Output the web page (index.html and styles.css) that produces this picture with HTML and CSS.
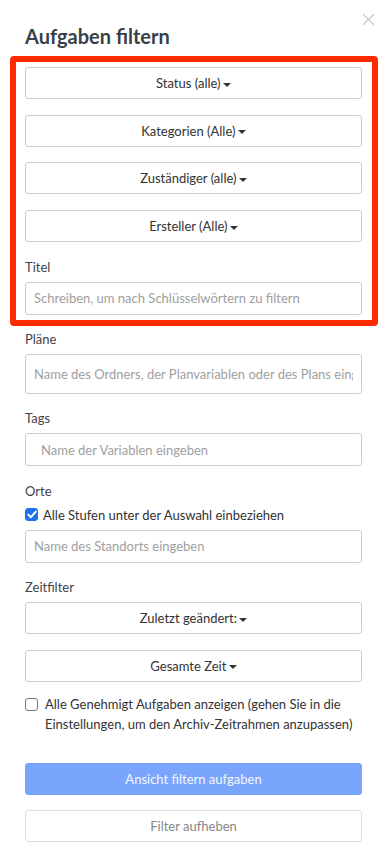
FILE: index.html
```html
<!DOCTYPE html>
<html>
<head>
    <meta charset="utf-8">
    <title>Aufgaben filtern</title>
    <link rel="stylesheet" href="styles.css">
</head>
<body>
    <div class="modal">
        <button class="close-btn" aria-label="Schließen">
            <svg width="13" height="13" viewBox="0 0 13 13">
                <path d="M1 1 L12 12 M12 1 L1 12" stroke="#c8c8c8" stroke-width="1.2" fill="none"/>
            </svg>
        </button>
        <h1>Aufgaben filtern</h1>

        <div class="highlight">
            <button class="dropdown">Status (alle) <span class="caret"></span></button>
            <button class="dropdown">Kategorien (Alle) <span class="caret"></span></button>
            <button class="dropdown">Zuständiger (alle) <span class="caret"></span></button>
            <button class="dropdown">Ersteller (Alle) <span class="caret"></span></button>

            <div class="field">
                <label class="label">Titel</label>
                <input class="input" type="text" placeholder="Schreiben, um nach Schlüsselwörtern zu filtern">
            </div>
        </div>

        <div class="field">
            <label class="label">Pläne</label>
            <input class="input tall" type="text" placeholder="Name des Ordners, der Planvariablen oder des Plans eingeben">
        </div>

        <div class="field">
            <label class="label">Tags</label>
            <input class="input indent" type="text" placeholder="Name der Variablen eingeben">
        </div>

        <div class="field">
            <label class="label">Orte</label>
            <label class="check">
                <span class="box checked">
                    <svg width="10" height="9" viewBox="0 0 10 9">
                        <path d="M1.3 4.6 L3.9 7.2 L8.8 1.6" stroke="#fff" stroke-width="2" fill="none" stroke-linecap="round" stroke-linejoin="round"/>
                    </svg>
                </span>
                Alle Stufen unter der Auswahl einbeziehen
            </label>
            <input class="input" type="text" placeholder="Name des Standorts eingeben">
        </div>

        <div class="field">
            <label class="label">Zeitfilter</label>
            <button class="dropdown">Zuletzt geändert: <span class="caret"></span></button>
            <button class="dropdown">Gesamte Zeit <span class="caret"></span></button>
        </div>

        <label class="check wrap">
            <span class="box"></span>
            <span>Alle Genehmigt Aufgaben anzeigen (gehen Sie in die Einstellungen, um den Archiv-Zeitrahmen anzupassen)</span>
        </label>

        <button class="primary-btn">Ansicht filtern aufgaben</button>
        <button class="clear-btn">Filter aufheben</button>
    </div>
</body>
</html>
```

FILE: styles.css
```css
* {
    margin: 0;
    padding: 0;
    box-sizing: border-box;
    font-family: Lato, 'Open Sans', sans-serif;
}

body {
    background: #fff;
    color: #333;
}

.modal {
    position: relative;
    width: 386px;
    padding: 24px 24px 0 25px;
    display: flex;
    flex-direction: column;
}

.close-btn {
    position: absolute;
    top: 13px;
    right: 11px;
    background: none;
    border: none;
    width: 13px;
    height: 13px;
    display: flex;
}

h1 {
    font-size: 20px;
    line-height: 24px;
    font-weight: 700;
    color: #3a3f47;
    margin-bottom: 19px;
}

.highlight {
    position: relative;
    display: flex;
    flex-direction: column;
}

/* red annotation frame drawn over the top block */
.highlight::after {
    content: '';
    position: absolute;
    top: -11px;
    left: -15px;
    right: -16px;
    bottom: -11px;
    border: 6px solid #ff2a00;
    border-radius: 4px;
    pointer-events: none;
}

.dropdown {
    height: 32px;
    background: #fff;
    border: 1px solid #ccc;
    border-radius: 3px;
    font-size: 13px;
    color: #333;
    margin-bottom: 15.67px;
    cursor: pointer;
}

.caret {
    display: inline-block;
    width: 0;
    height: 0;
    border-left: 4px solid transparent;
    border-right: 4px solid transparent;
    border-top: 4px solid #333;
    vertical-align: middle;
    margin-left: -1px;
}

.field {
    display: flex;
    flex-direction: column;
}

.label {
    font-size: 13px;
    line-height: 18px;
    color: #444;
    margin-bottom: 6px;
}

.input {
    height: 33px;
    border: 1px solid #ccc;
    border-radius: 3px;
    padding: 0 8px;
    font-size: 13px;
    color: #333;
    margin-bottom: 15.5px;
    outline: none;
}

.input::placeholder {
    color: #a0a0a0;
}

.input.tall {
    height: 40px;
}

.input.indent {
    padding-left: 15px;
}

.highlight .field .input {
    margin-bottom: 0;
}

.highlight + .field {
    margin-top: 15px;
}

.check {
    display: flex;
    align-items: center;
    gap: 5px;
    font-size: 13px;
    line-height: 18px;
    color: #333;
    margin-bottom: 6px;
}

.box {
    width: 13px;
    height: 13px;
    border: 1px solid #777;
    border-radius: 3px;
    display: flex;
    align-items: center;
    justify-content: center;
    flex-shrink: 0;
}

.box.checked {
    background: #1a73e8;
    border-color: #1a73e8;
}

.check.wrap {
    align-items: flex-start;
    gap: 7px;
    line-height: 20px;
    margin-top: -3px;
    margin-bottom: 29px;
}

.check.wrap .box {
    margin-top: 4px;
}

.primary-btn {
    height: 32px;
    background: #7aa5fd;
    border: 1px solid #76a1f8;
    border-radius: 3px;
    color: #f4f7ff;
    font-size: 13px;
    margin-bottom: 15px;
}

.clear-btn {
    height: 32px;
    background: #fff;
    border: 1px solid #ddd;
    border-radius: 3px;
    color: #888;
    font-size: 13px;
}
```
